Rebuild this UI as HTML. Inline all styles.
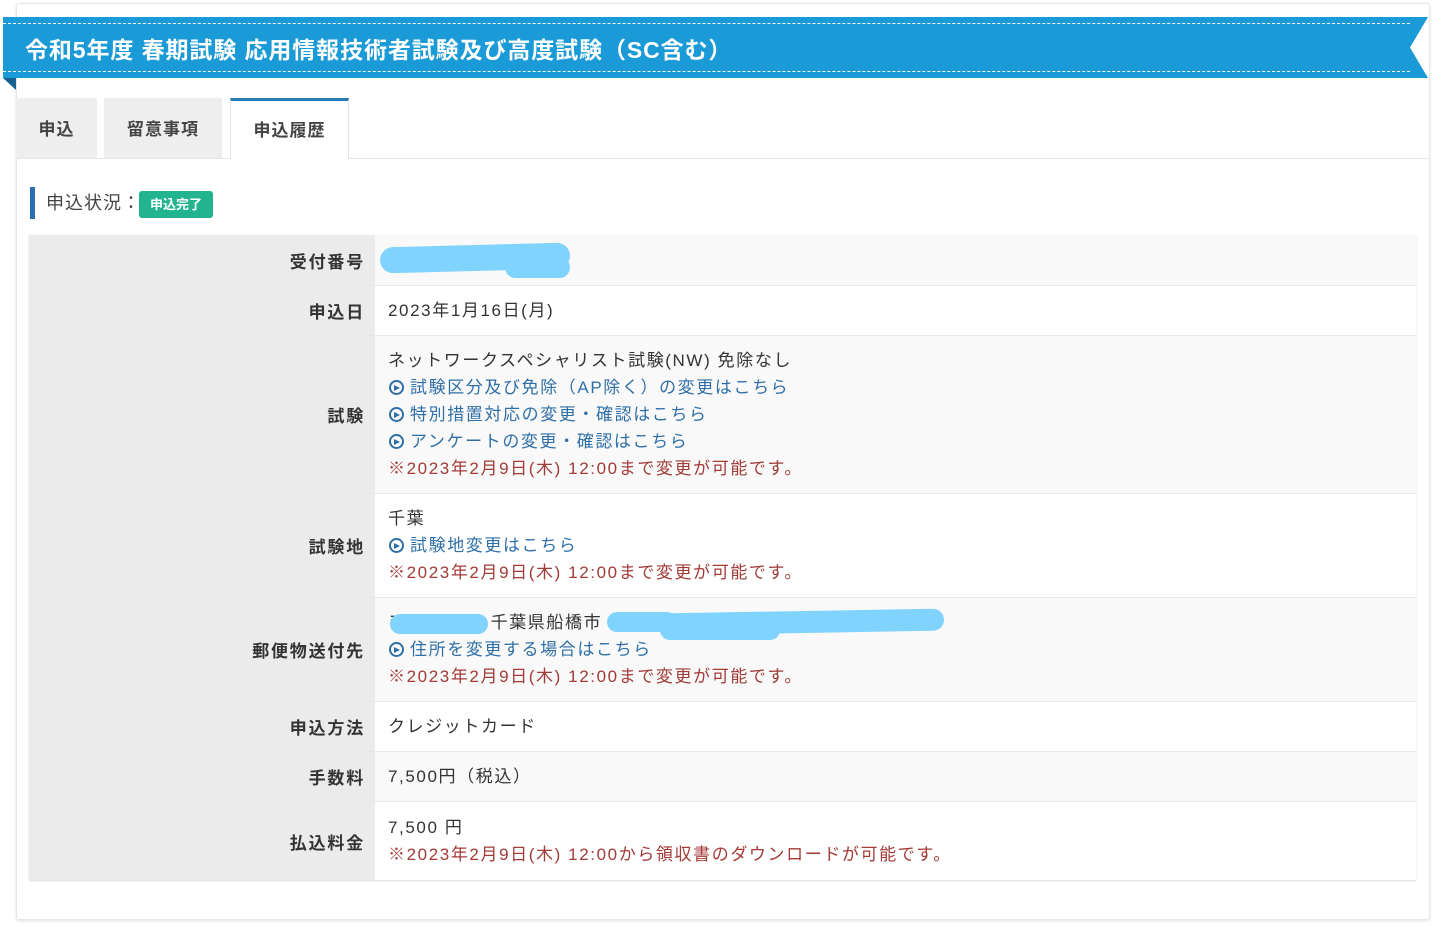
<!DOCTYPE html>
<html><head><meta charset="utf-8"><style>
*{box-sizing:border-box;margin:0;padding:0}
body{width:1440px;height:928px;background:#fff;font-family:"Liberation Sans","Noto Sans CJK JP",sans-serif;color:#333;position:relative;overflow:hidden}
.card{position:absolute;left:16px;top:3px;width:1414px;height:917px;border:1px solid #e6e6e6;border-radius:3px;box-shadow:0 1px 3px rgba(0,0,0,.12)}
.banner{position:absolute;left:3px;top:17px;width:1425px;height:61px;background:#1a9ad6;clip-path:polygon(0 0,100% 0,calc(100% - 18px) 50%,100% 100%,0 100%);box-shadow:0 2px 2px rgba(0,0,0,.2)}
.banner:before,.banner:after{content:"";position:absolute;left:0;right:18px;border-top:1px dashed #fff}
.banner:before{top:6px}.banner:after{bottom:6px}
.banner span{position:absolute;left:22px;top:14px;color:#fff;font-size:23px;font-weight:bold;white-space:nowrap;letter-spacing:0.9px}
.fold{position:absolute;left:3px;top:78px;width:0;height:0;border-top:12px solid #17608f;border-left:13px solid transparent}
.tab{position:absolute;top:98px;height:60px;background:#eee;font-size:17px;font-weight:bold;color:#444;text-align:center;line-height:64px;letter-spacing:1px}
.tab.act{background:#fff;border-top:3px solid #2a7ab5;border-left:1px solid #e3e3e3;border-right:1px solid #e3e3e3;line-height:60px;height:61px}
.tline{position:absolute;left:16px;top:158px;width:1414px;border-top:1px solid #e6e6e6}
.hd{position:absolute;left:30px;top:187px;height:32px;border-left:5px solid #2a6fb0;padding-left:11px;font-size:18px;line-height:32px;color:#444;letter-spacing:1px}
.badge{position:absolute;left:139px;top:191px;width:74px;height:27px;background:#22b48f;color:#fff;font-size:13px;font-weight:bold;text-align:center;line-height:28px;border-radius:3px}
.tbl{position:absolute;left:29px;top:235px;width:1387px;box-shadow:0 1px 2px rgba(0,0,0,.15)}
.row{position:relative;display:flex;border-top:1px solid #e8e8e8}
.th{width:346px;background:#ebebeb;font-weight:bold;font-size:17px;text-align:right;padding-right:10px;display:flex;align-items:center;justify-content:flex-end;letter-spacing:1.8px}
.td{flex:1;padding:0 13px;font-size:17px;line-height:27px;display:flex;flex-direction:column;justify-content:center;position:relative;letter-spacing:1.6px;white-space:nowrap}
.g .td{background:#f9f9f9}
.l{color:#2f6fa8}
.r{color:#a33a37}
.ic{display:inline-block;width:15px;height:15px;border:2px solid #2f6fa8;border-radius:50%;position:relative;top:2px;margin-right:6px;margin-left:1px}
.ic:after{content:"";position:absolute;left:3px;top:2.5px;border-left:6px solid #2f6fa8;border-top:3.5px solid transparent;border-bottom:3.5px solid transparent}
.blob{position:absolute;background:#80d3fd;border-radius:14px}
</style></head><body>
<div class="card"></div>
<div class="banner"><span>令和5年度 春期試験 応用情報技術者試験及び高度試験（SC含む）</span></div>
<div class="fold"></div>
<div class="tab" style="left:16px;width:81px">申込</div>
<div class="tab" style="left:104px;width:118px">留意事項</div>
<div class="tline"></div>
<div class="tab act" style="left:230px;width:119px">申込履歴</div>
<div class="hd">申込状況：</div>
<div class="badge">申込完了</div>
<div class="tbl">
<div class="row g" style="height:50px;border-top:none"><div class="th">受付番号</div><div class="td">
<div class="blob" style="left:5px;top:10px;width:190px;height:26px;transform:rotate(-1.5deg)"></div>
<div class="blob" style="left:130px;top:22px;width:65px;height:21px"></div></div></div>
<div class="row" style="height:50px"><div class="th">申込日</div><div class="td">2023年1月16日(月)</div></div>
<div class="row g" style="height:158px"><div class="th">試験</div><div class="td">
<div>ネットワークスペシャリスト試験(NW) 免除なし</div>
<div class="l"><span class="ic"></span>試験区分及び免除（AP除く）の変更はこちら</div>
<div class="l"><span class="ic"></span>特別措置対応の変更・確認はこちら</div>
<div class="l"><span class="ic"></span>アンケートの変更・確認はこちら</div>
<div class="r">※2023年2月9日(木) 12:00まで変更が可能です。</div></div></div>
<div class="row" style="height:104px"><div class="th">試験地</div><div class="td">
<div>千葉</div>
<div class="l"><span class="ic"></span>試験地変更はこちら</div>
<div class="r">※2023年2月9日(木) 12:00まで変更が可能です。</div></div></div>
<div class="row g" style="height:104px"><div class="th">郵便物送付先</div><div class="td">
<div>〒<span style="display:inline-block;width:84px"></span>千葉県船橋市</div>
<div class="l"><span class="ic"></span>住所を変更する場合はこちら</div>
<div class="r">※2023年2月9日(木) 12:00まで変更が可能です。</div>
<div class="blob" style="left:15px;top:16px;width:98px;height:20px"></div>
<div class="blob" style="left:232px;top:14px;width:70px;height:20px"></div>
<div class="blob" style="left:285px;top:13px;width:284px;height:22px;transform:rotate(-1deg)"></div>
<div class="blob" style="left:285px;top:22px;width:120px;height:20px"></div>
</div></div>
<div class="row" style="height:50px"><div class="th">申込方法</div><div class="td">クレジットカード</div></div>
<div class="row g" style="height:50px"><div class="th">手数料</div><div class="td">7,500円（税込）</div></div>
<div class="row" style="height:79px"><div class="th">払込料金</div><div class="td">
<div>7,500 円</div>
<div class="r">※2023年2月9日(木) 12:00から領収書のダウンロードが可能です。</div></div></div>
</div>
</body></html>
